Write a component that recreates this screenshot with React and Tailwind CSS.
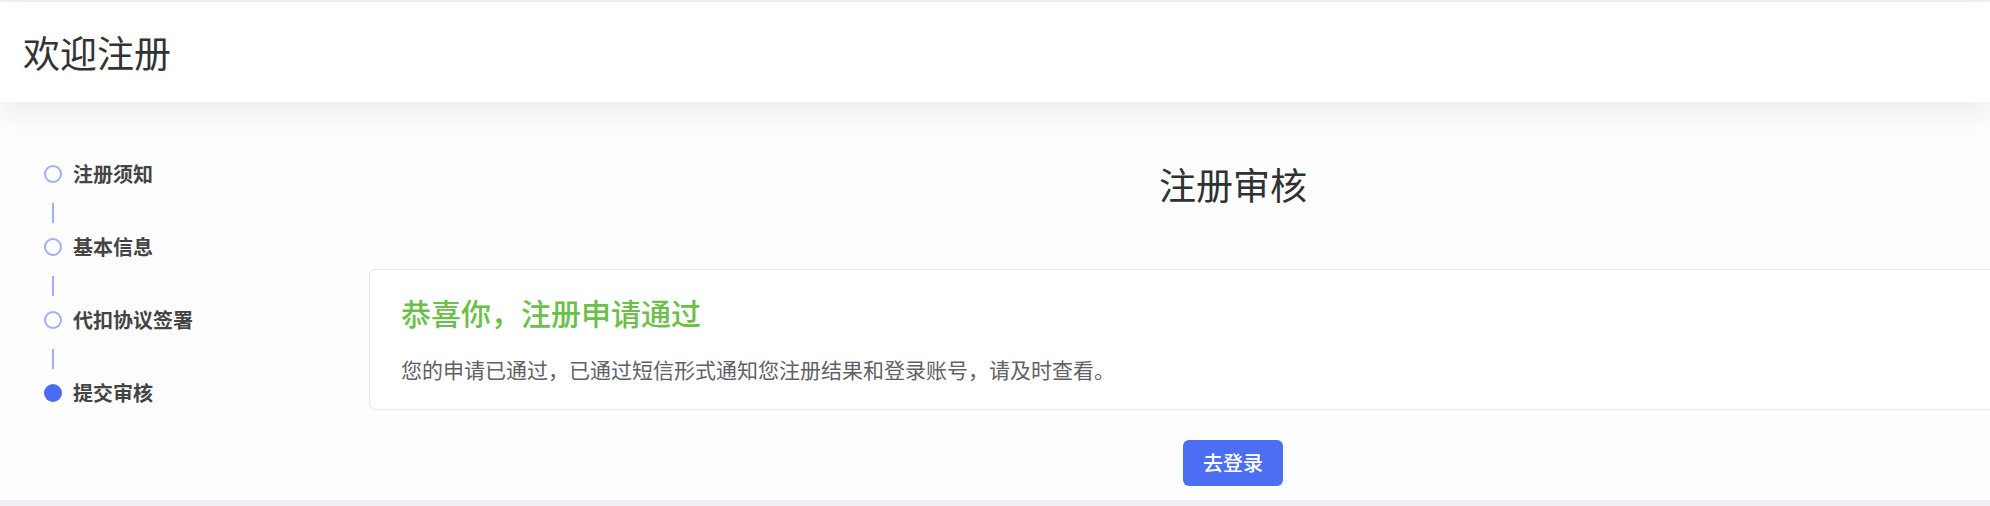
import React from "react";

const FONT = { fontFamily: '"Noto Sans CJK SC", "Noto Sans", sans-serif' };

function Step({ label, active }) {
  return (
    <div className="flex items-center h-[20px]">
      <div
        className={
          active
            ? "w-[18px] h-[18px] rounded-full bg-[#4a6cf0] ml-[44px] shrink-0"
            : "w-[18px] h-[18px] rounded-full border-[2px] border-[#9bb0f7] bg-white ml-[44px] shrink-0"
        }
      />
      <span className="ml-[11px] text-[20px] leading-[20px] font-semibold text-[#444444] whitespace-nowrap">
        {label}
      </span>
    </div>
  );
}

function Connector() {
  return (
    <div className="h-[53px] pt-[19px]">
      <div className="ml-[52px] w-[2px] h-[20px] bg-[#9bb0f7]" />
    </div>
  );
}

export default function App() {
  return (
    <div className="w-[1990px] h-[506px] bg-[#eff1f5] pt-[2px] overflow-hidden" style={FONT}>
      <div className="relative z-10 h-[100px] bg-white flex items-center px-[23px] shadow-[0_10px_28px_rgba(0,0,0,0.07)]">
        <h1 className="text-[37px] leading-[44px] text-[#333333] font-normal">欢迎注册</h1>
      </div>
      <div className="h-[398px] bg-[#fdfdfd] flex overflow-hidden">
        <div className="w-[369px] shrink-0 pt-[62px] flex flex-col">
          <Step label="注册须知" />
          <Connector />
          <Step label="基本信息" />
          <Connector />
          <Step label="代扣协议签署" />
          <Connector />
          <Step label="提交审核" active />
        </div>
        <div className="w-[1728px] shrink-0 pt-[60px] flex flex-col items-center">
          <h2 className="text-[37px] leading-[44px] text-[#303133] font-normal">注册审核</h2>
          <div className="mt-[63px] w-full h-[141px] bg-white border border-[#e4e6eb] rounded-[6px] pl-[31px] pt-[24px]">
            <div className="text-[30px] leading-[36px] text-[#6cbf4a] font-medium">恭喜你，注册申请通过</div>
            <div className="mt-[24px] text-[21px] leading-[30px] text-[#5f6166]">
              您的申请已通过，已通过短信形式通知您注册结果和登录账号，请及时查看。
            </div>
          </div>
          <button className="mt-[30px] w-[100px] h-[46px] rounded-[6px] bg-[#4c6ef2] text-white text-[20px] font-medium">
            去登录
          </button>
        </div>
      </div>
    </div>
  );
}
